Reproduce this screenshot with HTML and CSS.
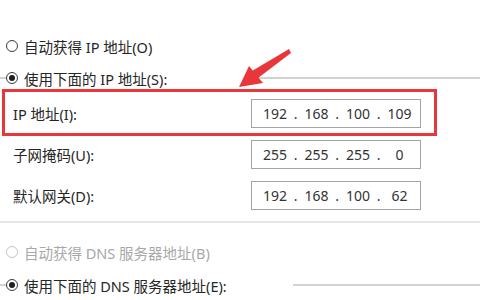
FILE: index.html
```html
<!DOCTYPE html>
<html lang="zh-CN">
<head>
  <meta charset="UTF-8">
  <meta name="viewport" content="width=device-width, initial-scale=1.0">
  <title>IPv4 属性</title>
  <link rel="stylesheet" href="styles.css">
</head>
<body>

  <div class="dialog">
    <div class="opt ip-auto">
      <span class="radio"></span>
      <span>自动获得 IP 地址(O)</span>
    </div>

    <div class="opt legend">
      <span class="legend-label legend-ip">
        <span class="radio checked"></span>
        <span>使用下面的 IP 地址(S):</span>
      </span>
    </div>

    <div class="fields">
      <div class="field hl">
        <span class="label">IP 地址(I):</span>
        <div class="ipbox">
          <span class="oct">192</span><span class="dot">.</span><span class="oct">168</span><span class="dot">.</span><span class="oct">100</span><span class="dot">.</span><span class="oct">109</span>
        </div>
      </div>
      <div class="field">
        <span class="label">子网掩码(U):</span>
        <div class="ipbox">
          <span class="oct">255</span><span class="dot">.</span><span class="oct">255</span><span class="dot">.</span><span class="oct">255</span><span class="dot">.</span><span class="oct">0</span>
        </div>
      </div>
      <div class="field">
        <span class="label">默认网关(D):</span>
        <div class="ipbox">
          <span class="oct">192</span><span class="dot">.</span><span class="oct">168</span><span class="dot">.</span><span class="oct">100</span><span class="dot">.</span><span class="oct">62</span>
        </div>
      </div>
    </div>

    <div class="sep"></div>

    <div class="opt dns-auto disabled">
      <span class="radio"></span>
      <span>自动获得 DNS 服务器地址(B)</span>
    </div>

    <div class="opt legend dns-manual">
      <span class="legend-label legend-dns">
        <span class="radio checked"></span>
        <span>使用下面的 DNS 服务器地址(E):</span>
      </span>
    </div>

    <!-- annotation arrow -->
    <svg class="arrow" width="480" height="300" viewBox="0 0 480 300">
      <polygon points="289,49 291,53 258,78 252,71" fill="#e8363b"/>
      <polygon points="239,87 249,66 263,83" fill="#e8363b"/>
    </svg>
  </div>

</body>
</html>
```

FILE: styles.css
```css
body {
  margin: 0;
  background: #fff;
  color: #262626;
  font-family: "Noto Sans", "Noto Sans CJK SC", sans-serif;
  font-size: 14.5px;
}
.dialog {
  position: relative;
  width: 480px;
  height: 300px;
  overflow: hidden;
}
.opt {
  display: flex;
  align-items: center;
  height: 20px;
  padding-left: 6px;
  white-space: nowrap;
}
.ip-auto {
  margin-top: 36px;
}
/* group box frame line running behind the legend radio */
.legend {
  margin-top: 12px;
  background: linear-gradient(#d2d2d2, #d2d2d2) no-repeat 0 9px / 100% 2px;
}
.legend-label {
  display: flex;
  align-items: center;
  height: 20px;
  background: #fff;
}
.legend-ip {
  padding-right: 82px;
}
.legend-dns {
  padding-right: 66px;
}
.radio {
  box-sizing: border-box;
  width: 12px;
  height: 12px;
  margin-right: 6px;
  border: 1px solid #3a3a3a;
  border-radius: 50%;
  display: flex;
  align-items: center;
  justify-content: center;
  flex: none;
}
.radio.checked::after {
  content: '';
  width: 6px;
  height: 6px;
  border-radius: 50%;
  background: #1f1f1f;
}
.fields {
  display: flex;
  flex-direction: column;
  gap: 12px;
  margin-top: 11px;
  padding-left: 13px;
}
.field {
  display: flex;
  align-items: center;
  width: 408px;
  height: 29px;
}
.label {
  width: 238px;
}
.ipbox {
  box-sizing: border-box;
  display: flex;
  align-items: center;
  width: 170px;
  height: 29px;
  padding-left: 11px;
  border: 1px solid #a3a3a3;
  color: #333;
  font-size: 14px;
}
.oct {
  width: 24px;
  text-align: center;
}
.dot {
  width: 17.5px;
  text-align: center;
}
.hl {
  position: relative;
}
.hl::after {
  content: '';
  position: absolute;
  left: -11px;
  right: -16px;
  top: -10px;
  bottom: -8px;
  border: 3px solid #e8363b;
}
.sep {
  margin-top: 11px;
  border-top: 2px solid #e6e6e6;
}
.dns-auto {
  margin-top: 19px;
}
.disabled {
  color: #a8a8a8;
}
.disabled .radio {
  border-color: #c4c4c4;
}
.dns-manual {
  margin-top: 13px;
}
.arrow {
  position: absolute;
  left: 0;
  top: 0;
  pointer-events: none;
}
```
